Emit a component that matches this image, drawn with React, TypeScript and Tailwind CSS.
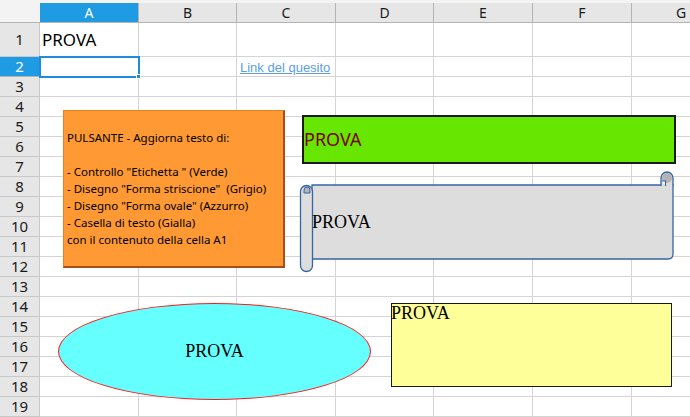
import React from "react";

const cols = ["A", "B", "C", "D", "E", "F", "G"];
const rows = Array.from({ length: 19 }, (_, i) => i + 1);

function HeaderRow() {
  return (
    <>
      <div className="bg-[#f3f3f3] border-b border-[#b4b4b4]" />
      {cols.map((c) => (
        <div
          key={c}
          className={
            c === "A"
              ? "flex items-center justify-center bg-[#1e9be2] text-white border-r border-b border-[#b4b4b4] text-[14px]"
              : "flex items-center justify-center bg-[#e6e6e6] text-[#1a1a1a] border-r border-b border-[#b4b4b4] text-[14px]"
          }
        >
          {c}
        </div>
      ))}
    </>
  );
}

function SheetRow({ n }: { n: number }) {
  return (
    <>
      <div
        className={
          n === 2
            ? "flex items-center justify-center bg-[#1e9be2] text-white border-r border-b border-[#b4b4b4] text-[15px] leading-none"
            : "flex items-center justify-center bg-[#e6e6e6] text-[#1a1a1a] border-r border-b border-[#c8c8c8] text-[15px] leading-none"
        }
      >
        {n}
      </div>
      {cols.map((c) => {
        const selected = n === 2 && c === "A";
        return (
          <div
            key={c}
            className={
              selected
                ? "relative z-10 border-r border-b border-[#d4d4d4] outline-2 -outline-offset-1 outline-[#1e8be0]"
                : "relative flex items-end border-r border-b border-[#d4d4d4] whitespace-nowrap"
            }
          >
            {selected && (
              <span className="absolute -right-[3px] -bottom-[3px] w-[5px] h-[5px] bg-[#1e8be0] border border-white" />
            )}
            {n === 1 && c === "A" && (
              <span className="self-center pl-[2px] text-[17px] text-black">PROVA</span>
            )}
            {n === 2 && c === "C" && (
              <span className="pl-[3px] font-['Liberation_Sans'] text-[13px] leading-[17px] text-[#5b9ee0] underline">
                Link del quesito
              </span>
            )}
          </div>
        );
      })}
    </>
  );
}

export default function App() {
  return (
    <div className="relative w-[690px] h-[417px] overflow-hidden bg-white font-['Noto_Sans',sans-serif]">
      <div className="h-[3px] bg-[#f3f3f3]" />
      <div className="grid grid-cols-[40px_99px_98px_99px_98px_99px_99px_99px] grid-rows-[20px_34px_repeat(18,20px)]">
        <HeaderRow />
        {rows.map((n) => (
          <SheetRow key={n} n={n} />
        ))}
      </div>

      {/* drawing objects floating over the sheet */}
      <div className="absolute left-[63px] top-[110px] w-[222px] h-[158px] bg-[#ff9933] border-t border-l border-[#e8801e] border-r-2 border-b-2 border-r-[#a3501a] border-b-[#a3501a] flex items-center px-[3px]">
        <div className="text-[11.5px] leading-[17px] text-black whitespace-pre">
          {"PULSANTE - Aggiorna testo di:\n\n- Controllo \"Etichetta \" (Verde)\n- Disegno \"Forma striscione\"  (Grigio)\n- Disegno \"Forma ovale\" (Azzurro)\n- Casella di testo (Gialla)\ncon il contenuto della cella A1"}
        </div>
      </div>

      <div className="absolute left-[302px] top-[115px] w-[374px] h-[49px] bg-[#66e600] border-2 border-[#1a1a1a] flex items-center">
        <span className="text-[18px] text-[#7a0000]">PROVA</span>
      </div>

      <div className="absolute left-[298px] top-[170px] w-[380px] h-[105px]">
        <svg width="380" height="105" viewBox="0 0 380 105" className="absolute inset-0">
          <path
            d="M14 15 H375 V84 Q375 89 370 89 H14 Z"
            fill="#dddddd"
            stroke="#3465a4"
            strokeWidth="1.3"
          />
          <path
            d="M363 16 V8 A6 6 0 0 1 375 8 V16"
            fill="#dddddd"
            stroke="#3465a4"
            strokeWidth="1.3"
          />
          <circle cx="369" cy="8" r="5" fill="#b3b3b3" />
          <path d="M363.5 11 H367.5 V16" fill="#ffffff" stroke="#3465a4" strokeWidth="1.2" />
          <rect x="2.5" y="15.5" width="12" height="86" rx="6" fill="#dddddd" stroke="#3465a4" strokeWidth="1.3" />
          <path d="M6 23 V20 A3 3 0 0 1 12 20 V23 Z" fill="#b3b3b3" stroke="#3465a4" strokeWidth="1" />
        </svg>
        <div className="absolute left-[14px] top-[15px] h-[74px] flex items-center">
          <span className="font-['Liberation_Serif',serif] text-[18px] text-black">PROVA</span>
        </div>
      </div>

      <div className="absolute left-[58px] top-[303px] w-[313px] h-[97px] rounded-[50%] bg-[#66ffff] border border-[#ff1a1a] flex items-center justify-center">
        <span className="font-['Liberation_Serif',serif] text-[18px] text-black">PROVA</span>
      </div>

      <div className="absolute left-[391px] top-[303px] w-[281px] h-[84px] bg-[#ffff99] border-[1.5px] border-[#1a1a1a]">
        <span className="block -ml-[1px] -mt-[1px] font-['Liberation_Serif',serif] text-[18px] leading-[21px] text-black">
          PROVA
        </span>
      </div>
    </div>
  );
}
